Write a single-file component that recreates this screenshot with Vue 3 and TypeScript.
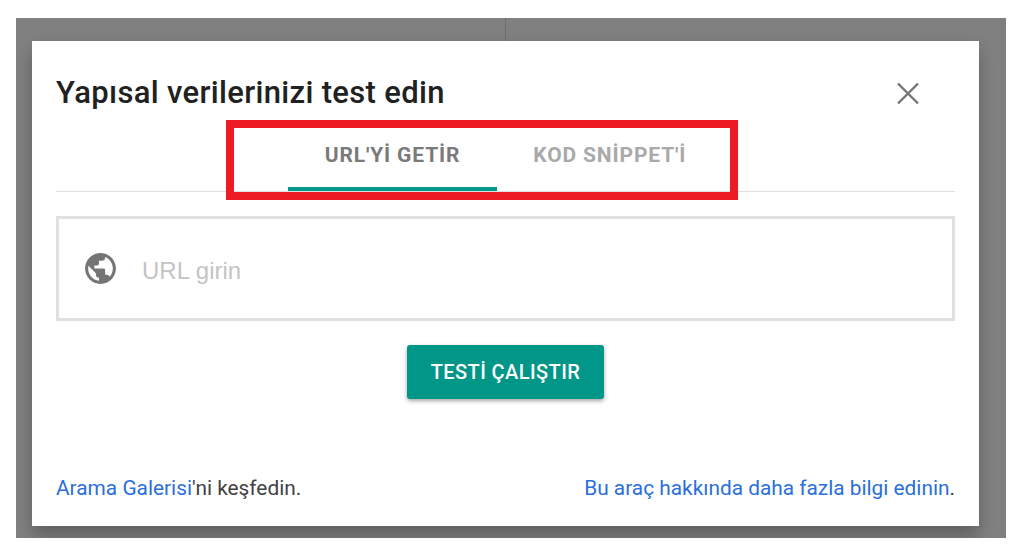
<script setup lang="ts">
const tabs: { label: string; active: boolean }[] = [
  { label: "URL'Yİ GETİR", active: true },
  { label: "KOD SNİPPET'İ", active: false },
]
</script>

<template>
  <div class="page">
    <div class="backdrop">
      <div class="rule"></div>
      <section class="dialog">
        <header class="head">
          <h1 class="title">Yapısal verilerinizi test edin</h1>
          <button class="close" aria-label="Kapat">
            <svg width="24" height="24" viewBox="0 0 24 24">
              <path d="M2 2.5 L22 22.5 M22 2.5 L2 22.5" stroke="#757575" stroke-width="2.4" fill="none" />
            </svg>
          </button>
        </header>
        <nav class="tabs">
          <div v-for="t in tabs" :key="t.label" class="tab" :class="{ active: t.active }">{{ t.label }}</div>
        </nav>
        <div class="field">
          <svg class="globe" width="37" height="37" viewBox="0 0 24 24">
            <path fill="#757575" d="M12 2C6.48 2 2 6.48 2 12s4.48 10 10 10 10-4.48 10-10S17.52 2 12 2zm-1 17.93c-3.95-.49-7-3.85-7-7.93 0-.62.08-1.21.21-1.79L9 15v1c0 1.1.9 2 2 2v1.93zm6.9-2.54c-.26-.81-1-1.39-1.9-1.39h-1v-3c0-.55-.45-1-1-1H8v-2h2c.55 0 1-.45 1-1V7h2c1.1 0 2-.9 2-2v-.41c2.93 1.19 5 4.06 5 7.41 0 2.08-.8 3.97-2.1 5.39z" />
          </svg>
          <span class="placeholder">URL girin</span>
        </div>
        <div class="actions">
          <button class="run">TESTİ ÇALIŞTIR</button>
        </div>
        <footer class="foot">
          <span><a class="link">Arama Galerisi</a>'ni keşfedin.</span>
          <span><a class="link">Bu araç hakkında daha fazla bilgi edinin</a>.</span>
        </footer>
        <div class="highlight"></div>
      </section>
    </div>
  </div>
</template>

<style>
html, body { margin: 0; background: #fff; }
</style>

<style scoped>
.page {
  width: 1024px;
  height: 552px;
  box-sizing: border-box;
  padding: 18px 18px 14px 16px;
  background: #fff;
  font-family: Roboto, "Liberation Sans", sans-serif;
}
.backdrop {
  position: relative;
  height: 520px;
  box-sizing: border-box;
  padding: 23px 27px 12px 16px;
  background: #808080;
  overflow: hidden;
}
.rule {
  position: absolute;
  left: 489px;
  top: 0;
  width: 1px;
  height: 23px;
  background: #6e6e6e;
}
.dialog {
  position: relative;
  height: 485px;
  box-sizing: border-box;
  padding: 0 24px;
  background: #fff;
  display: flex;
  flex-direction: column;
  box-shadow: 0 12px 16px rgba(0, 0, 0, 0.22), 0 0 12px rgba(0, 0, 0, 0.05);
}
.head {
  height: 78px;
  display: flex;
  align-items: flex-start;
  justify-content: space-between;
}
.title {
  margin: 34px 0 0;
  font-size: 31px;
  line-height: 36px;
  letter-spacing: 0.33px;
  font-weight: 500;
  color: #212121;
}
.close {
  margin: 40px 35px 0 0;
  padding: 0;
  width: 24px;
  height: 24px;
  border: 0;
  background: none;
}
.tabs {
  height: 72px;
  display: flex;
  justify-content: center;
  border-bottom: 1px solid #e0e0e0;
  box-sizing: content-box;
}
.tab {
  padding: 0 36.5px;
  height: 72px;
  box-sizing: border-box;
  line-height: 72px;
  font-size: 21px;
  letter-spacing: 0.85px;
  font-weight: 700;
  color: #a9a9a9;
  white-space: nowrap;
}
.tab.active {
  color: #7a7a7a;
  border-bottom: 4px solid #009688;
}
.field {
  margin-top: 24px;
  height: 105px;
  box-sizing: border-box;
  border: 3px solid #e0e0e0;
  display: flex;
  align-items: center;
  padding-left: 23px;
}
.globe { flex: none; }
.placeholder {
  margin-left: 23px;
  padding-top: 5px;
  font-family: "Liberation Sans", Arial, sans-serif;
  font-size: 24px;
  color: #c4c4c4;
}
.actions {
  margin-top: 24px;
  display: flex;
  justify-content: center;
}
.run {
  width: 197px;
  height: 54px;
  border: 0;
  border-radius: 3px;
  background: #009688;
  color: #fff;
  font-family: Roboto, sans-serif;
  font-size: 20px;
  letter-spacing: 0.42px;
  font-weight: 500;
  box-shadow: 0 2px 4px rgba(0, 0, 0, 0.35);
}
.foot {
  margin-top: auto;
  padding-bottom: 24px;
  display: flex;
  justify-content: space-between;
  font-size: 20.85px;
  line-height: 28px;
  color: #424242;
}
.link { color: #2a6fdb; }
.highlight {
  position: absolute;
  left: 194px;
  top: 79px;
  width: 512px;
  height: 80px;
  box-sizing: border-box;
  border: 8px solid #ed1c24;
  pointer-events: none;
}
</style>
